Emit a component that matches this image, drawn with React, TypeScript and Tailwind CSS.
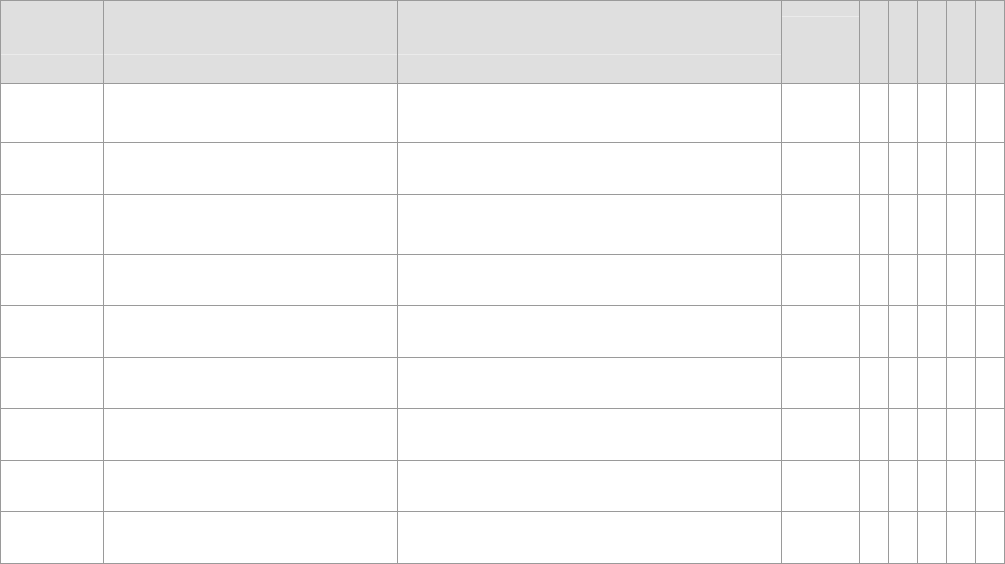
const ROWS = 9
const COLS = 9

function HeaderCell({ split }: { split: "none" | "low" | "high" }) {
  if (split === "none") return <div className="bg-[#dfdfdf]" />
  return (
    <div className="flex flex-col bg-[#dfdfdf]">
      <div className={split === "low" ? "h-[53px]" : "h-[15px]"} />
      <div className="h-px bg-[#ebebeb]" />
      <div className="flex-1" />
    </div>
  )
}

export default function App() {
  return (
    <div className="h-[564px] w-[1005px] bg-white font-['Liberation_Sans',sans-serif] text-sm">
      <div className="grid grid-cols-[102px_293px_383px_77px_28px_28px_28px_28px_28px] grid-rows-[82px_58px_51px_59px_50px_51px_50px_51px_50px_51px] gap-px bg-[#9a9a9a] p-px">
        <HeaderCell split="low" />
        <HeaderCell split="low" />
        <HeaderCell split="low" />
        <HeaderCell split="high" />
        <HeaderCell split="none" />
        <HeaderCell split="none" />
        <HeaderCell split="none" />
        <HeaderCell split="none" />
        <HeaderCell split="none" />
        {Array.from({ length: ROWS * COLS }).map((_, i) => (
          <div key={i} className="bg-white" />
        ))}
      </div>
    </div>
  )
}
